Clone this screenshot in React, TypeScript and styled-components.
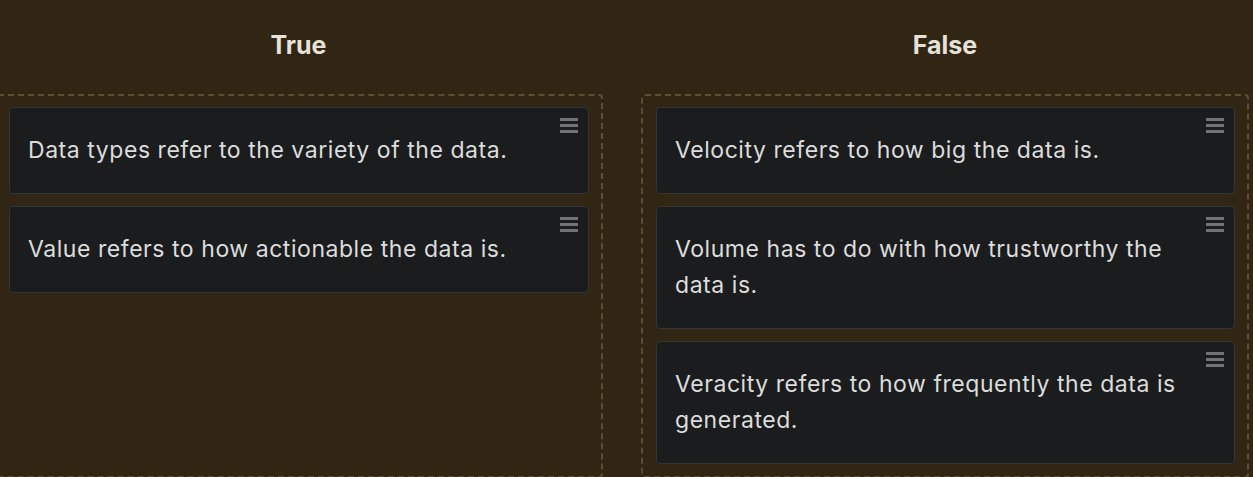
import React from 'react';
import styled, { createGlobalStyle } from 'styled-components';

const GlobalStyle = createGlobalStyle`
  html, body {
    margin: 0;
    padding: 0;
    background: #302613;
  }
  body {
    font-family: Inter, 'Noto Sans', sans-serif;
    overflow: hidden;
  }
`;

const Board = styled.div`
  display: grid;
  grid-template-columns: 609px 608px;
  column-gap: 38px;
  margin-left: -6px;
  width: 1255px;
`;

const Column = styled.div`
  display: flex;
  flex-direction: column;
`;

const Heading = styled.h2`
  margin: 0;
  height: 94px;
  display: flex;
  align-items: center;
  justify-content: center;
  padding-bottom: 4px;
  box-sizing: border-box;
  font-size: 25px;
  font-weight: 700;
  color: #e6e2da;
`;

const Zone = styled.div`
  flex: 1;
  display: flex;
  flex-direction: column;
  gap: 12px;
  padding: 11px 12px 12px 13px;
  border: 2px dashed #5b4e33;
  border-radius: 4px;
`;

const Card = styled.div`
  position: relative;
  background: #1b1c1e;
  border: 1px solid #343434;
  border-radius: 4px;
  padding: 24px 44px 25px 18px;
  min-height: 36px;
  font-size: 23px;
  letter-spacing: 0.55px;
  line-height: 36px;
  color: #dcdcdc;
`;

const Handle = styled.span`
  position: absolute;
  top: 10px;
  right: 10px;
  width: 18px;
  height: 15px;
  display: flex;
  flex-direction: column;
  justify-content: space-between;

  &::before, &::after, & > i {
    content: '';
    display: block;
    height: 3px;
    background: #727272;
  }
`;

const columns = [
  {
    title: 'True',
    items: [
      'Data types refer to the variety of the data.',
      'Value refers to how actionable the data is.',
    ],
  },
  {
    title: 'False',
    items: [
      'Velocity refers to how big the data is.',
      'Volume has to do with how trustworthy the data is.',
      'Veracity refers to how frequently the data is generated.',
    ],
  },
];

export default function App() {
  return (
    <>
      <GlobalStyle />
      <Board>
        {columns.map((col) => (
          <Column key={col.title}>
            <Heading>{col.title}</Heading>
            <Zone>
              {col.items.map((text) => (
                <Card key={text}>
                  {text}
                  <Handle>
                    <i />
                  </Handle>
                </Card>
              ))}
            </Zone>
          </Column>
        ))}
      </Board>
    </>
  );
}
